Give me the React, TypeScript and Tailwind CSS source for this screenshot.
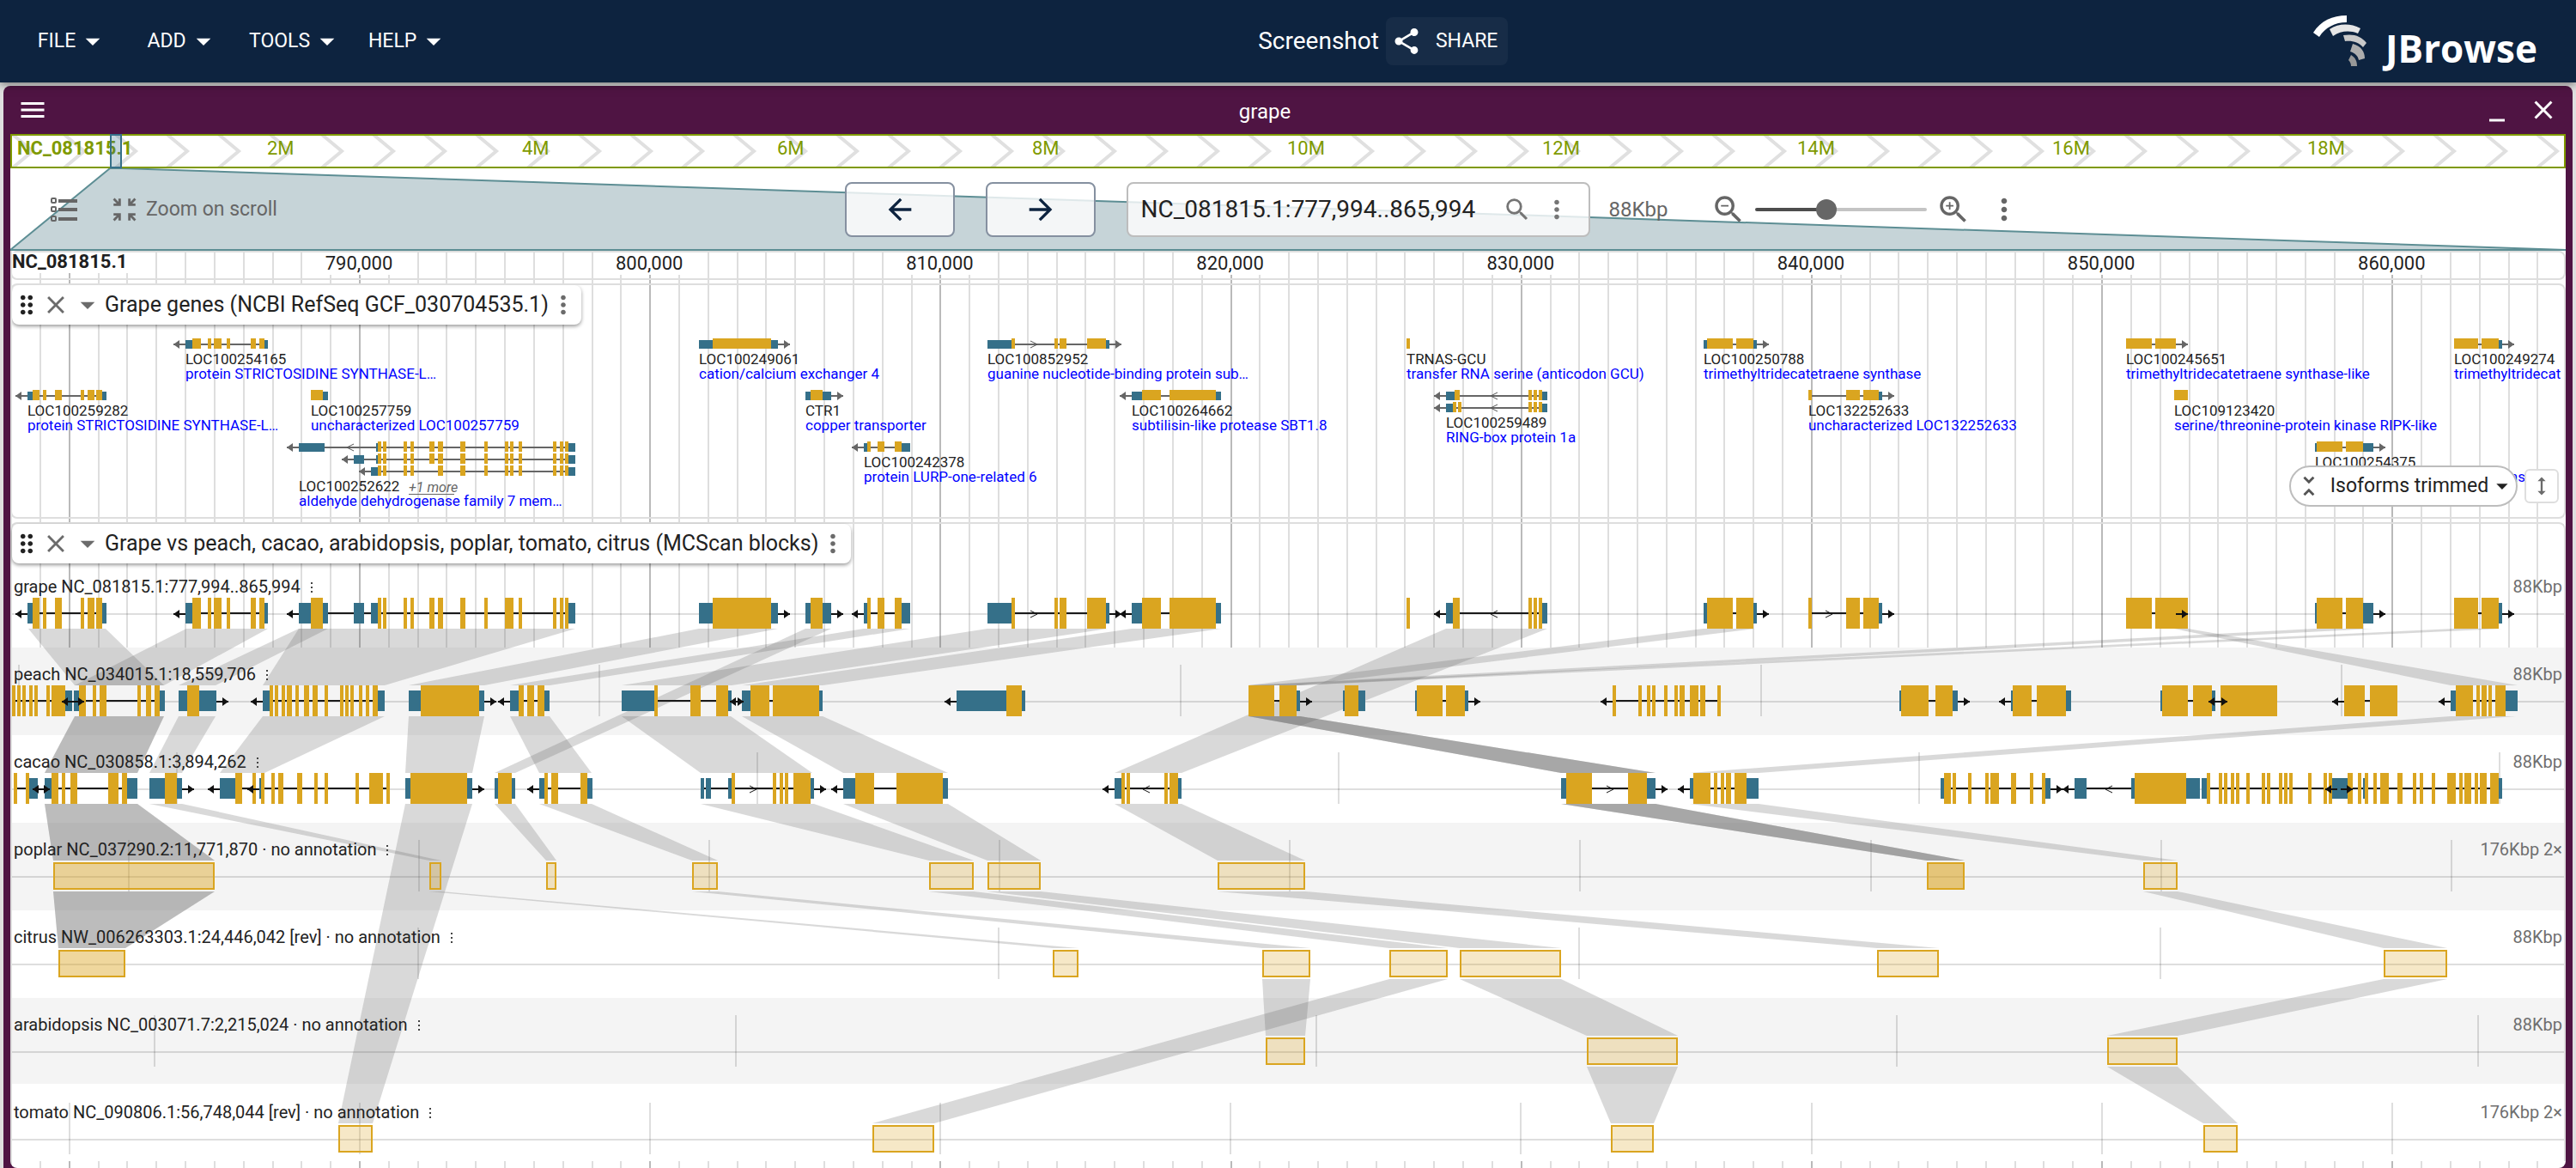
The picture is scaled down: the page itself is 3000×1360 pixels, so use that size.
import React from "react";
import {
  MdArrowBack,
  MdArrowDropDown,
  MdArrowForward,
  MdClose,
  MdDragIndicator,
  MdHeight,
  MdMenu,
  MdMinimize,
  MdMoreVert,
  MdSearch,
  MdShare,
  MdUnfoldLess,
  MdZoomIn,
  MdZoomInMap,
  MdZoomOut,
} from "react-icons/md";

const LEFT = 12;
const WIDTH = 2976;
const START_BP = 777994;
const SPAN_BP = 88000;
const GOLD = "#daa520";
const TEAL = "#357089";

const toX = (bp: number) => LEFT + ((bp - START_BP) / SPAN_BP) * WIDTH;

type Dir = "l" | "r" | "";
type Part = { utr: boolean; a: number; b: number };

/* "u32-38 38-46": parts of a transcript, u marks an untranslated region */
const parse = (spec: string): Part[] =>
  spec.split(" ").map((t) => {
    const utr = t[0] === "u";
    const [a, b] = (utr ? t.slice(1) : t).split("-").map(Number);
    return { utr, a, b };
  });

type Gene = {
  name: string;
  desc: string;
  y: number;
  dir: Dir;
  forms: string[];
  merged?: string;
  chevron?: number;
  more?: string;
};

const ALDH_TAIL =
  "440-444 446-450 470-474 478-482 500-506 510-516 536-542 564-568 588-592 594-598 604-608 644-648 652-656 658-662 u662-670";
const ALDH_TAIL_SHORT =
  "440-444 446-450 470-474 478-482 510-516 536-542 564-568 588-592 594-598 604-608 644-648 652-656 658-662 u662-670";

const GENES: Gene[] = [
  { name: "LOC100259282", desc: "protein STRICTOSIDINE SYNTHASE-L…", y: 454, dir: "l", forms: ["u32-38 38-46 50-54 64-72 94-98 102-110 112-119 u119-124"] },
  { name: "LOC100254165", desc: "protein STRICTOSIDINE SYNTHASE-L…", y: 394, dir: "l", forms: ["u216-224 224-234 242-246 249-258 264-268 292-298 302-308 u308-312"] },
  {
    name: "LOC100252622",
    desc: "aldehyde dehydrogenase family 7 mem…",
    y: 514,
    dir: "l",
    chevron: 408,
    more: "+1 more",
    forms: ["u348-378 u438-440 " + ALDH_TAIL, "u412-424 u438-440 " + ALDH_TAIL, "u432-440 " + ALDH_TAIL_SHORT],
    merged: "u348-378 u412-424 u432-440 588-596 " + ALDH_TAIL,
  },
  { name: "LOC100257759", desc: "uncharacterized LOC100257759", y: 454, dir: "", forms: ["362-376 u376-382"] },
  { name: "LOC100249061", desc: "cation/calcium exchanger 4", y: 394, dir: "r", forms: ["u814-830 830-898 u898-906"] },
  { name: "CTR1", desc: "copper transporter", y: 454, dir: "r", forms: ["u938-944 944-958 u958-968"] },
  { name: "LOC100242378", desc: "protein LURP-one-related 6", y: 514, dir: "l", forms: ["u1006-1010 1010-1014 1022-1030 1042-1050 u1050-1060"] },
  { name: "LOC100852952", desc: "guanine nucleotide-binding protein sub…", y: 394, dir: "r", chevron: 1204, forms: ["u1150-1178 1178-1182 1228-1232 1234-1242 1266-1288 u1288-1292"] },
  { name: "LOC100264662", desc: "subtilisin-like protease SBT1.8", y: 454, dir: "l", forms: ["u1318-1330 1330-1352 1362-1416 u1416-1422"] },
  { name: "TRNAS-GCU", desc: "transfer RNA serine (anticodon GCU)", y: 394, dir: "", forms: ["1638-1642"] },
  {
    name: "LOC100259489",
    desc: "RING-box protein 1a",
    y: 454,
    dir: "l",
    chevron: 1740,
    forms: [
      "u1684-1694 1694-1700 1780-1784 1786-1790 1792-1796 u1796-1802",
      "u1684-1692 1692-1696 1698-1702 1780-1784 1786-1790 1792-1796 u1796-1802",
    ],
    merged: "u1684-1692 1692-1700 1780-1784 1786-1790 1792-1796 u1796-1802",
  },
  { name: "LOC100250788", desc: "trimethyltridecatetraene synthase", y: 394, dir: "r", forms: ["u1984-1988 1988-2018 2022-2042 u2042-2046"] },
  { name: "LOC132252633", desc: "uncharacterized LOC132252633", y: 454, dir: "r", forms: ["2106-2110 2150-2166 2170-2188 u2188-2192"] },
  { name: "LOC109123420", desc: "serine/threonine-protein kinase RIPK-like", y: 454, dir: "", forms: ["2532-2548"] },
  { name: "LOC100245651", desc: "trimethyltridecatetraene synthase-like", y: 394, dir: "r", forms: ["2476-2506 2510-2534"] },
  { name: "LOC100254375", desc: "", y: 514, dir: "r", forms: ["u2696-2698 2698-2728 2732-2752 u2752-2764"] },
  { name: "LOC100249274", desc: "trimethyltridecat", y: 394, dir: "r", forms: ["2858-2886 2890-2910 u2910-2914"] },
];

type Model = { dir: Dir; spec: string; chevron?: number };

const PEACH: Model[] = [
  { dir: "r", spec: "14-18 20-24 26-30 34-38 40-44 54-58 60-76 u76-84" },
  { dir: "l", spec: "u86-92 92-100 108-112 116-124 160-164 170-176 180-186 u186-192" },
  { dir: "r", spec: "u208-218 218-232 u232-252" },
  { dir: "l", spec: "u306-314 314-318 320-324 328-332 334-340 344-348 354-360 364-370 378-382 396-400 402-406 408-412 418-422 426-430 434-440 u440-448" },
  { dir: "r", spec: "u476-490 490-558 u558-564" },
  { dir: "l", spec: "u594-604 604-610 614-622 626-634 u634-640" },
  { dir: "r", spec: "u724-762 762-766 804-816 834-848 u848-852" },
  { dir: "l", spec: "u864-874 874-896 900-954 u954-958" },
  { dir: "l", spec: "u1114-1172 1172-1190 u1190-1194" },
  { dir: "r", spec: "1454-1484 1490-1510 u1510-1514" },
  { dir: "", spec: "u1564-1566 1566-1582 u1582-1590" },
  { dir: "r", spec: "u1648-1650 1650-1680 1684-1706 u1706-1710" },
  { dir: "l", spec: "1878-1882 1908-1912 1918-1922 1924-1928 1938-1942 1950-1954 1956-1962 1968-1978 1980-1986 2000-2004" },
  { dir: "r", spec: "u2212-2214 2214-2246 2254-2274 u2274-2280" },
  { dir: "l", spec: "u2342-2344 2344-2366 2372-2406 u2406-2412" },
  { dir: "r", spec: "u2516-2518 2518-2548 2554-2576 u2576-2580" },
  { dir: "l", spec: "2586-2652" },
  { dir: "l", spec: "2730-2754 2760-2792" },
  { dir: "l", spec: "u2854-2860 2860-2880 2884-2888 2890-2896 2898-2902 2906-2918 u2918-2932" },
];

const CACAO: Model[] = [
  { dir: "r", spec: "16-20 30-34 u34-44" },
  { dir: "l", spec: "u52-60 60-68 72-76 82-90 126-138 142-148 u148-160" },
  { dir: "r", spec: "u174-192 192-206 u206-212" },
  { dir: "l", spec: "u256-274 274-282 294-298" },
  { dir: "l", spec: "u302-304 304-308 316-320 324-330 346-352 366-370 378-382 414-418 430-446 450-454" },
  { dir: "r", spec: "u472-478 478-544 u544-550" },
  { dir: "", spec: "u576-580 580-596 u596-600" },
  { dir: "l", spec: "u628-634 634-638 642-650 676-684 u684-690" },
  { dir: "r", chevron: 877, spec: "u816-820 u822-828 u848-852 852-856 900-904 908-912 914-918 924-944 u944-948" },
  { dir: "l", spec: "u982-996 996-1018 1044-1098 u1098-1104" },
  { dir: "l", chevron: 1335, spec: "u1298-1306 1306-1310 1312-1316 1356-1360 1362-1372 u1372-1376" },
  { dir: "r", chevron: 1875, spec: "u1818-1824 1824-1854 1896-1918 u1918-1928" },
  { dir: "l", spec: "u1968-1972 1972-1992 1996-2000 2004-2008 2010-2016 2020-2034 u2034-2048" },
  { dir: "r", spec: "u2260-2264 2264-2272 2274-2278 2292-2296 2312-2316 2318-2328 2342-2348 2364-2368 2378-2382 u2382-2388" },
  { dir: "l", chevron: 2456, spec: "u2416-2430 u2482-2486 2486-2546 u2546-2562" },
  { dir: "r", spec: "u2564-2570 2570-2574 2584-2588 2590-2594 2598-2602 2604-2608 2616-2620 2634-2638 2640-2644 2654-2658 2660-2664 2666-2670 2688-2692 2706-2710 2712-2716 u2716-2726" },
  { dir: "l", spec: "u2722-2734 2734-2740 2746-2750 u2752-2754 2754-2758 2764-2768 2772-2782 2792-2798 2810-2814 2818-2822 2832-2836 2850-2860 2864-2868 2870-2878 2882-2886 2888-2896 2900-2910 u2910-2914" },
];

/* top-left, top-right, bottom-left, bottom-right, y from, y to, copies */
const RIBBONS: number[][] = [
  [33, 123, 87, 191, 732, 798, 1],
  [217, 312, 87, 191, 732, 798, 1],
  [348, 382, 208, 251, 732, 798, 1],
  [348, 670, 306, 448, 732, 798, 1],
  [814, 906, 476, 564, 732, 798, 1],
  [938, 968, 576, 600, 732, 900, 1],
  [1006, 1060, 594, 640, 732, 798, 1],
  [1150, 1290, 724, 852, 732, 798, 1],
  [1318, 1422, 864, 958, 732, 798, 1],
  [1684, 1802, 1298, 1376, 732, 900, 1],
  [1984, 2044, 1454, 1514, 732, 798, 1],
  [2696, 2764, 1454, 1514, 732, 798, 1],
  [2858, 2914, 1454, 1514, 732, 798, 1],
  [2532, 2548, 2854, 2932, 732, 798, 1],
  [87, 191, 52, 160, 834, 900, 2],
  [208, 251, 174, 212, 834, 900, 1],
  [306, 448, 256, 308, 834, 900, 1],
  [476, 564, 472, 550, 834, 900, 1],
  [594, 640, 628, 689, 834, 900, 1],
  [724, 851, 816, 946, 834, 900, 1],
  [864, 958, 982, 1104, 834, 900, 1],
  [1454, 1514, 1818, 1928, 834, 900, 3],
  [2854, 2930, 1968, 2048, 834, 900, 1],
  [52, 160, 62, 250, 936, 1002, 2],
  [174, 212, 500, 514, 936, 1002, 1],
  [472, 550, 394, 434, 936, 1308, 1],
  [576, 600, 636, 648, 936, 1002, 1],
  [628, 689, 806, 836, 936, 1002, 1],
  [816, 948, 1082, 1134, 936, 1002, 1],
  [982, 1104, 1150, 1212, 936, 1002, 1],
  [1298, 1376, 1418, 1520, 936, 1002, 1],
  [1818, 1928, 2244, 2288, 936, 1002, 3],
  [1968, 2048, 2496, 2536, 936, 1002, 1],
  [62, 250, 68, 146, 1038, 1104, 2],
  [500, 514, 1226, 1256, 1038, 1104, 1],
  [806, 836, 1470, 1526, 1038, 1104, 1],
  [1082, 1134, 1618, 1686, 1038, 1104, 1],
  [1150, 1212, 1700, 1818, 1038, 1104, 1],
  [1418, 1520, 2186, 2258, 1038, 1104, 1],
  [2496, 2536, 2776, 2850, 1038, 1104, 1],
  [1470, 1526, 1474, 1520, 1140, 1206, 1],
  [1618, 1686, 1016, 1088, 1140, 1308, 1],
  [1700, 1818, 1848, 1954, 1140, 1206, 1],
  [2776, 2850, 2454, 2536, 1140, 1206, 1],
  [1848, 1954, 1876, 1926, 1242, 1308, 1],
  [2454, 2536, 2566, 2606, 1242, 1308, 1],
];

/* x from, x to, y, layers of fill */
const BLOCKS: number[][] = [
  [62, 250, 1004, 2], [500, 514, 1004, 1], [636, 648, 1004, 1], [806, 836, 1004, 1], [1082, 1134, 1004, 1],
  [1150, 1212, 1004, 1], [1418, 1520, 1004, 1], [2244, 2288, 1004, 3], [2496, 2536, 1004, 1],
  [68, 146, 1106, 2], [1226, 1256, 1106, 1], [1470, 1526, 1106, 1], [1618, 1686, 1106, 1], [1700, 1818, 1106, 1],
  [2186, 2258, 1106, 1], [2776, 2850, 1106, 1],
  [1474, 1520, 1208, 1], [1848, 1954, 1208, 1], [2454, 2536, 1208, 1],
  [394, 434, 1310, 1], [1016, 1088, 1310, 1], [1876, 1926, 1310, 1], [2566, 2606, 1310, 1],
];

const TICKS: { y: number; xs: number[] }[] = [
  { y: 774, xs: [21, 697, 1374, 2050, 2726] },
  { y: 876, xs: [205, 881, 1558, 2234, 2910] },
  { y: 978, xs: [149, 487, 825, 1163, 1501, 1839, 2178, 2516, 2854] },
  { y: 1080, xs: [486, 1162, 1838, 2515] },
  { y: 1182, xs: [179, 856, 1532, 2208, 2885] },
  { y: 1284, xs: [80, 418, 756, 1094, 1432, 1770, 2109, 2447, 2785] },
];

const ROWS = [
  { label: "grape NC_081815.1:777,994..865,994", size: "88Kbp" },
  { label: "peach NC_034015.1:18,559,706", size: "88Kbp" },
  { label: "cacao NC_030858.1:3,894,262", size: "88Kbp" },
  { label: "poplar NC_037290.2:11,771,870 · no annotation", size: "176Kbp 2×" },
  { label: "citrus NW_006263303.1:24,446,042 [rev] · no annotation", size: "88Kbp" },
  { label: "arabidopsis NC_003071.7:2,215,024 · no annotation", size: "88Kbp" },
  { label: "tomato NC_090806.1:56,748,044 [rev] · no annotation", size: "176Kbp 2×" },
];

function Arrow({ parts, dir, cy, color }: { parts: Part[]; dir: Dir; cy: number; color: string }) {
  if (!dir) return null;
  const from = dir === "l" ? parts[0].a : parts[parts.length - 1].b;
  const s = dir === "l" ? -1 : 1;
  const tip = from + s * 14;
  return (
    <g fill={color}>
      <rect x={Math.min(from, tip)} y={cy - 1} width={14} height={2} />
      <polygon points={`${tip},${cy} ${tip - s * 7},${cy - 5} ${tip - s * 7},${cy + 5}`} />
    </g>
  );
}

function Chevron({ x, dir, cy, color }: { x: number; dir: Dir; cy: number; color: string }) {
  const s = dir === "l" ? -1 : 1;
  return <polyline points={`${x - s * 4},${cy - 4} ${x + s * 4},${cy} ${x - s * 4},${cy + 4}`} fill="none" stroke={color} strokeWidth={1} />;
}

function Transcript({ parts, y, h, inset, insetBottom, color }: { parts: Part[]; y: number; h: number; inset: number; insetBottom: number; color: string }) {
  const a = parts[0].a;
  const b = parts[parts.length - 1].b;
  const cy = y + (h + inset - insetBottom) / 2;
  return (
    <g>
      <rect x={a} y={Math.round(cy) - 1} width={b - a} height={2} fill={color} />
      {parts.map((p, i) => (
        <rect
          key={i}
          x={p.a}
          y={p.utr ? y + inset : y}
          width={p.b - p.a}
          height={p.utr ? h - inset - insetBottom : h}
          fill={p.utr ? TEAL : GOLD}
        />
      ))}
    </g>
  );
}

function ModelRow({ models, y }: { models: Model[]; y: number }) {
  const cy = y + 19;
  return (
    <g>
      {models.map((m, i) => (
        <Transcript key={i} parts={parse(m.spec)} y={y} h={36} inset={6} insetBottom={6} color="#1a1a1a" />
      ))}
      {models.map((m, i) => (
        <g key={i}>
          <Arrow parts={parse(m.spec)} dir={m.dir} cy={cy} color="#111" />
          {m.chevron ? <Chevron x={m.chevron} dir={m.dir} cy={cy} color="#111" /> : null}
        </g>
      ))}
    </g>
  );
}

function GridLines() {
  const lines = [];
  for (let bp = 778000; bp < START_BP + SPAN_BP; bp += 1000) {
    lines.push(
      <rect key={bp} x={Math.round(toX(bp))} y={292} width={2} height={1068} fill="#000" opacity={bp % 10000 === 0 ? 0.27 : 0.13} />
    );
  }
  return (
    <svg aria-hidden className="absolute inset-0 h-full w-full" viewBox="12 292 2976 1068" preserveAspectRatio="none">
      {lines}
    </svg>
  );
}

function Overview() {
  return (
    <svg className="block w-full" viewBox="12 156 2976 40" role="img" aria-label="Overview of NC_081815.1">
      <rect x={13} y={157} width={2974} height={38} fill="#fff" />
      <g fill="none" stroke="#e0e0e0" strokeWidth={4}>
        {Array.from({ length: 50 }, (_, i) => (
          <polyline key={i} points={`${14 + i * 60},156 ${38 + i * 60},176 ${14 + i * 60},196`} />
        ))}
      </g>
      <rect x={13} y={157} width={2974} height={38} fill="none" stroke="#7f9a00" strokeWidth={2} />
      <g fill="#7f9a00" fontSize={22}>
        <text x={20} y={180} fontWeight={700}>NC_081815.1</text>
        {[2, 4, 6, 8, 10, 12, 14, 16, 18].map((m) => (
          <text key={m} x={Math.round(14 + m * 148.5)} y={180}>{`${m}M`}</text>
        ))}
      </g>
      <rect x={129} y={157} width={12} height={38} fill="#357089" fillOpacity={0.28} stroke="#357089" strokeWidth={2} />
    </svg>
  );
}

function Ruler() {
  const majors = [790, 800, 810, 820, 830, 840, 850, 860];
  return (
    <div className="relative rounded-lg border-2 border-[#dedede]">
      <svg className="block w-full" viewBox="14 294 2972 30">
        <rect x={14} y={294} width={135} height={24} fill="#fff" />
        <text x={14} y={312} fontSize={22} fontWeight={700} fill="#1f1f1f">NC_081815.1</text>
        {majors.map((k) => (
          <g key={k}>
            <rect x={toX(k * 1000) - 41} y={294} width={82} height={26} fill="#fff" />
            <text x={toX(k * 1000)} y={314} fontSize={22} textAnchor="middle" fill="#1f1f1f">{`${k},000`}</text>
          </g>
        ))}
      </svg>
    </div>
  );
}

function TrackLabel({ title }: { title: string }) {
  return (
    <div className="absolute left-0 top-0 z-10 flex h-[46px] items-center rounded-lg bg-white pr-1 shadow-[0_2px_4px_rgba(0,0,0,0.4)]">
      <button aria-label="Drag track" className="text-[#222]"><MdDragIndicator size={34} /></button>
      <button aria-label="Close track" className="text-[#6b6b6b]"><MdClose size={34} /></button>
      <button aria-label="Collapse track" className="text-[#6b6b6b]"><MdArrowDropDown size={40} /></button>
      <h2 className="whitespace-nowrap text-[25px] leading-[46px] text-[#222]">{title}</h2>
      <button aria-label="Track menu" className="text-[#6b6b6b]"><MdMoreVert size={34} /></button>
    </div>
  );
}

function GeneTrack() {
  return (
    <div className="relative mt-1 overflow-hidden rounded-lg border-2 border-[#dedede]">
      <TrackLabel title="Grape genes (NCBI RefSeq GCF_030704535.1)" />
      <svg className="block w-full" viewBox="14 332 2972 270">
        {GENES.map((g) => {
          const x = parse(g.forms[0])[0].a;
          const base = g.y + (g.forms.length - 1) * 14;
          return (
            <g key={g.name}>
              {g.forms.map((f, i) => {
                const parts = parse(f);
                const y = g.y + i * 14;
                return (
                  <g key={i}>
                    <Transcript parts={parts} y={y} h={12} inset={2} insetBottom={0} color="#666" />
                    <Arrow parts={parts} dir={g.dir} cy={y + 7} color="#666" />
                    {g.chevron && (g.name !== "LOC100252622" || i === 0) ? <Chevron x={g.chevron} dir={g.dir} cy={y + 7} color="#555" /> : null}
                  </g>
                );
              })}
              <text x={x} y={base + 30} fontSize={17} fill="#222">{g.name}</text>
              {g.more ? (
                <g fill="#666">
                  <text x={476} y={base + 31} fontSize={16} fontStyle="italic">{g.more}</text>
                  <rect x={476} y={base + 33} width={53} height={1} />
                </g>
              ) : null}
              <text x={x} y={base + 47} fontSize={17} fill="#00f">{g.desc}</text>
            </g>
          );
        })}
        <text x={2941} y={561} fontSize={17} textAnchor="end" fill="#00f">ns</text>
      </svg>
      <button className="absolute bottom-3 right-[54px] flex h-12 w-[266px] items-center whitespace-nowrap rounded-full border-2 border-[#bdbdbd] bg-white pl-1 text-[23px] text-[#222]">
        <MdUnfoldLess size={34} className="text-[#555]" />
        <span className="ml-2">Isoforms trimmed</span>
        <MdArrowDropDown size={32} />
      </button>
      <button aria-label="Resize track" className="absolute bottom-4 right-[6px] flex h-10 w-10 items-center justify-center rounded-md border-2 border-[#dedede] bg-white text-[#6b6b6b]">
        <MdHeight size={28} />
      </button>
    </div>
  );
}

function SyntenyCanvas() {
  const grape: Model[] = GENES.map((g) => ({ dir: g.dir, spec: g.merged ?? g.forms[0], chevron: g.name === "LOC100252622" ? undefined : g.name === "LOC132252633" ? 2130 : g.chevron }));
  return (
    <svg aria-hidden className="absolute inset-0 h-full w-full" viewBox="14 610 2972 742" preserveAspectRatio="none">
      <rect x={14} y={754} width={2972} height={598} fill="#fff" />
      {[754, 958].map((y) => (
        <rect key={y} x={14} y={y} width={2972} height={102} fill="#f4f4f4" />
      ))}
      <rect x={14} y={1162} width={2972} height={100} fill="#f4f4f4" />
      {TICKS.map((t) => t.xs.map((x) => <rect key={`${t.y}-${x}`} x={x} y={t.y} width={2} height={60} fill="#000" opacity={0.13} />))}
      {[714, 816, 918, 1020, 1122, 1224, 1326].map((y) => (
        <rect key={y} x={14} y={y} width={2972} height={2} fill="#000" opacity={0.13} />
      ))}
      {RIBBONS.map(([a, b, c, d, y0, y1, n], i) =>
        Array.from({ length: n }, (_, k) => (
          <polygon key={`${i}-${k}`} points={`${a},${y0} ${b},${y0} ${d},${y1} ${c},${y1}`} fill="#696969" fillOpacity={0.25} />
        ))
      )}
      <ModelRow models={grape} y={696} />
      <ModelRow models={PEACH} y={798} />
      <ModelRow models={CACAO} y={900} />
      {BLOCKS.map(([a, b, y, n], i) => (
        <g key={i}>
          {Array.from({ length: n }, (_, k) => (
            <rect key={k} x={a} y={y} width={b - a} height={32} fill={GOLD} fillOpacity={0.25} />
          ))}
          <rect x={a + 1} y={y + 1} width={b - a - 2} height={30} fill="none" stroke={GOLD} strokeWidth={2} />
        </g>
      ))}
    </svg>
  );
}

function SyntenyTrack() {
  return (
    <div className="relative mt-1 rounded-t-lg border-2 border-b-0 border-[#dedede]">
      <div className="relative pt-[56px]">
        <SyntenyCanvas />
        <TrackLabel title="Grape vs peach, cacao, arabidopsis, poplar, tomato, citrus (MCScan blocks)" />
        <ul className="relative">
          {ROWS.map((r, i) => (
            <li key={r.label} className={i === ROWS.length - 1 ? "flex h-[74px] items-start justify-between px-[2px]" : "flex h-[102px] items-start justify-between px-[2px]"}>
              <span className="flex items-center text-[20px] leading-[34px] text-[#222]">
                {r.label}
                <button aria-label="Row menu" className="ml-2 text-[#444]">
                  <svg width="10" height="16" viewBox="0 0 10 16" fill="currentColor">
                    <rect x="4" y="3" width="2" height="2" />
                    <rect x="4" y="8" width="2" height="2" />
                    <rect x="4" y="13" width="2" height="2" />
                  </svg>
                </button>
              </span>
              <span className="text-[20px] leading-[34px] text-[#6f6f6f]">{r.size}</span>
            </li>
          ))}
        </ul>
      </div>
    </div>
  );
}

function Controls() {
  return (
    <div className="relative h-24 bg-white">
      <svg aria-hidden className="absolute inset-0 h-full w-full" viewBox="12 196 2976 96" preserveAspectRatio="none">
        <polygon points="128,196 142,196 2988,291 12,291" fill="#c6d4d8" stroke="#5d8e94" strokeWidth={2} />
      </svg>
      <div className="relative flex h-full items-center pl-[44px] text-[#666]">
        <button aria-label="Open track selector" className="mr-9">
          <svg width="36" height="36" viewBox="0 0 36 36" fill="currentColor">
            {[7, 17, 28].map((y) => (
              <g key={y}>
                <rect x="4" y={y - 2} width="5" height="5" rx="1" fill="none" stroke="currentColor" strokeWidth="2" />
                <rect x="12" y={y - 1} width="22" height="4" />
              </g>
            ))}
          </svg>
        </button>
        <button className="flex items-center whitespace-nowrap pr-7 text-[23px]">
          <MdZoomInMap size={34} className="mr-2" />
          Zoom on scroll
        </button>
        <div className="flex-1" />
        <button aria-label="Pan left" className="mr-9 flex h-16 w-32 items-center justify-center rounded-lg border-2 border-[#8590a0] bg-white/80 text-[#0d233f]">
          <MdArrowBack size={40} />
        </button>
        <button aria-label="Pan right" className="mr-9 flex h-16 w-32 items-center justify-center rounded-lg border-2 border-[#8590a0] bg-white/80 text-[#0d233f]">
          <MdArrowForward size={40} />
        </button>
        <div className="flex h-16 w-[540px] items-center rounded-lg border-2 border-[#bdbdbd] bg-white/80 pl-[14px] text-[#757575]">
          <input aria-label="Location" defaultValue="NC_081815.1:777,994..865,994" className="w-[420px] bg-transparent text-[28px] text-[#222] outline-none" />
          <button aria-label="Search" className="ml-[2px]"><MdSearch size={34} /></button>
          <button aria-label="Location menu" className="ml-3"><MdMoreVert size={34} /></button>
        </div>
        <span className="ml-[21px] w-[119px] text-[24px]">88Kbp</span>
        <button aria-label="Zoom out" className="mr-[10px]"><MdZoomOut size={42} /></button>
        <input
          aria-label="Zoom"
          type="range"
          defaultValue={40}
          className="h-6 w-[200px] appearance-none bg-transparent [&::-webkit-slider-runnable-track]:h-1 [&::-webkit-slider-runnable-track]:rounded-full [&::-webkit-slider-runnable-track]:bg-[linear-gradient(to_right,#4d4d4d_41%,#c4c4c4_41%)] [&::-webkit-slider-thumb]:-mt-[10px] [&::-webkit-slider-thumb]:h-6 [&::-webkit-slider-thumb]:w-6 [&::-webkit-slider-thumb]:appearance-none [&::-webkit-slider-thumb]:rounded-full [&::-webkit-slider-thumb]:bg-[#666]"
        />
        <button aria-label="Zoom in" className="ml-[10px]"><MdZoomIn size={42} /></button>
        <button aria-label="View menu" className="ml-[18px]"><MdMoreVert size={40} /></button>
        <div className="flex-1" />
      </div>
    </div>
  );
}

function Logo() {
  return (
    <a href="#" aria-label="JBrowse home" className="flex w-[324px] items-center pl-4 text-white">
      <svg width="66" height="64" viewBox="2692 24 66 64">
        <path d="M2694 46C2703 32 2716 26 2733 26V34C2719 34 2708 40 2701 51Z" fill="#fff" />
        <path d="M2713 42C2724 35 2737 35 2749 41L2746 47C2736 43 2726 44 2717 50Z" fill="#e6e6e6" />
        <path d="M2729 49C2741 47 2750 50 2756 58L2752 63C2747 57 2739 55 2731 56Z" fill="#c9c9c9" />
        <path d="M2740 59C2750 62 2754 68 2754 76L2747 78C2746 73 2743 70 2737 68Z" fill="#adadad" />
        <path d="M2738 72C2743 75 2745 79 2745 85H2738C2738 82 2737 80 2735 78Z" fill="#979797" />
      </svg>
      <span className="ml-5 mt-4 font-['Open_Sans',sans-serif] text-[44px] font-bold leading-none">JBrowse</span>
    </a>
  );
}

function AppBar() {
  return (
    <header className="relative z-10 flex h-24 items-center bg-[#0d233f] pl-[22px] text-white shadow-[0_2px_10px_rgba(0,0,0,0.5)]">
      <nav className="flex">
        {["FILE", "ADD", "TOOLS", "HELP"].map((m) => (
          <button key={m} className="flex min-w-32 items-center justify-center px-3 text-[23px]">
            {m}
            <MdArrowDropDown size={40} />
          </button>
        ))}
      </nav>
      <div className="flex-1" />
      <h1 className="ml-1 text-[28px]">Screenshot</h1>
      <button className="ml-2 flex h-14 w-[142px] items-center rounded-lg bg-[#172c47] pl-[6px] text-[23px]">
        <MdShare size={36} className="mr-4" />
        SHARE
      </button>
      <div className="flex-1" />
      <Logo />
    </header>
  );
}

export default function App() {
  return (
    <div className="min-h-screen overflow-hidden bg-[#dfdfdf] font-[Roboto,sans-serif]">
      <AppBar />
      <main className="mx-1 mt-1 rounded-t-lg bg-[#4f1443] px-2">
        <div className="flex h-14 items-center px-2 text-white">
          <button aria-label="View menu"><MdMenu size={36} /></button>
          <div className="flex-1" />
          <h2 className="pt-1 text-[24px]">grape</h2>
          <div className="flex-1" />
          <button aria-label="Minimize" className="mr-[18px]"><MdMinimize size={36} /></button>
          <button aria-label="Close"><MdClose size={36} /></button>
        </div>
        <div className="overflow-hidden rounded-b-lg bg-white">
          <Overview />
          <Controls />
          <div className="relative pb-2">
            <GridLines />
            <Ruler />
            <GeneTrack />
            <SyntenyTrack />
          </div>
        </div>
      </main>
    </div>
  );
}
